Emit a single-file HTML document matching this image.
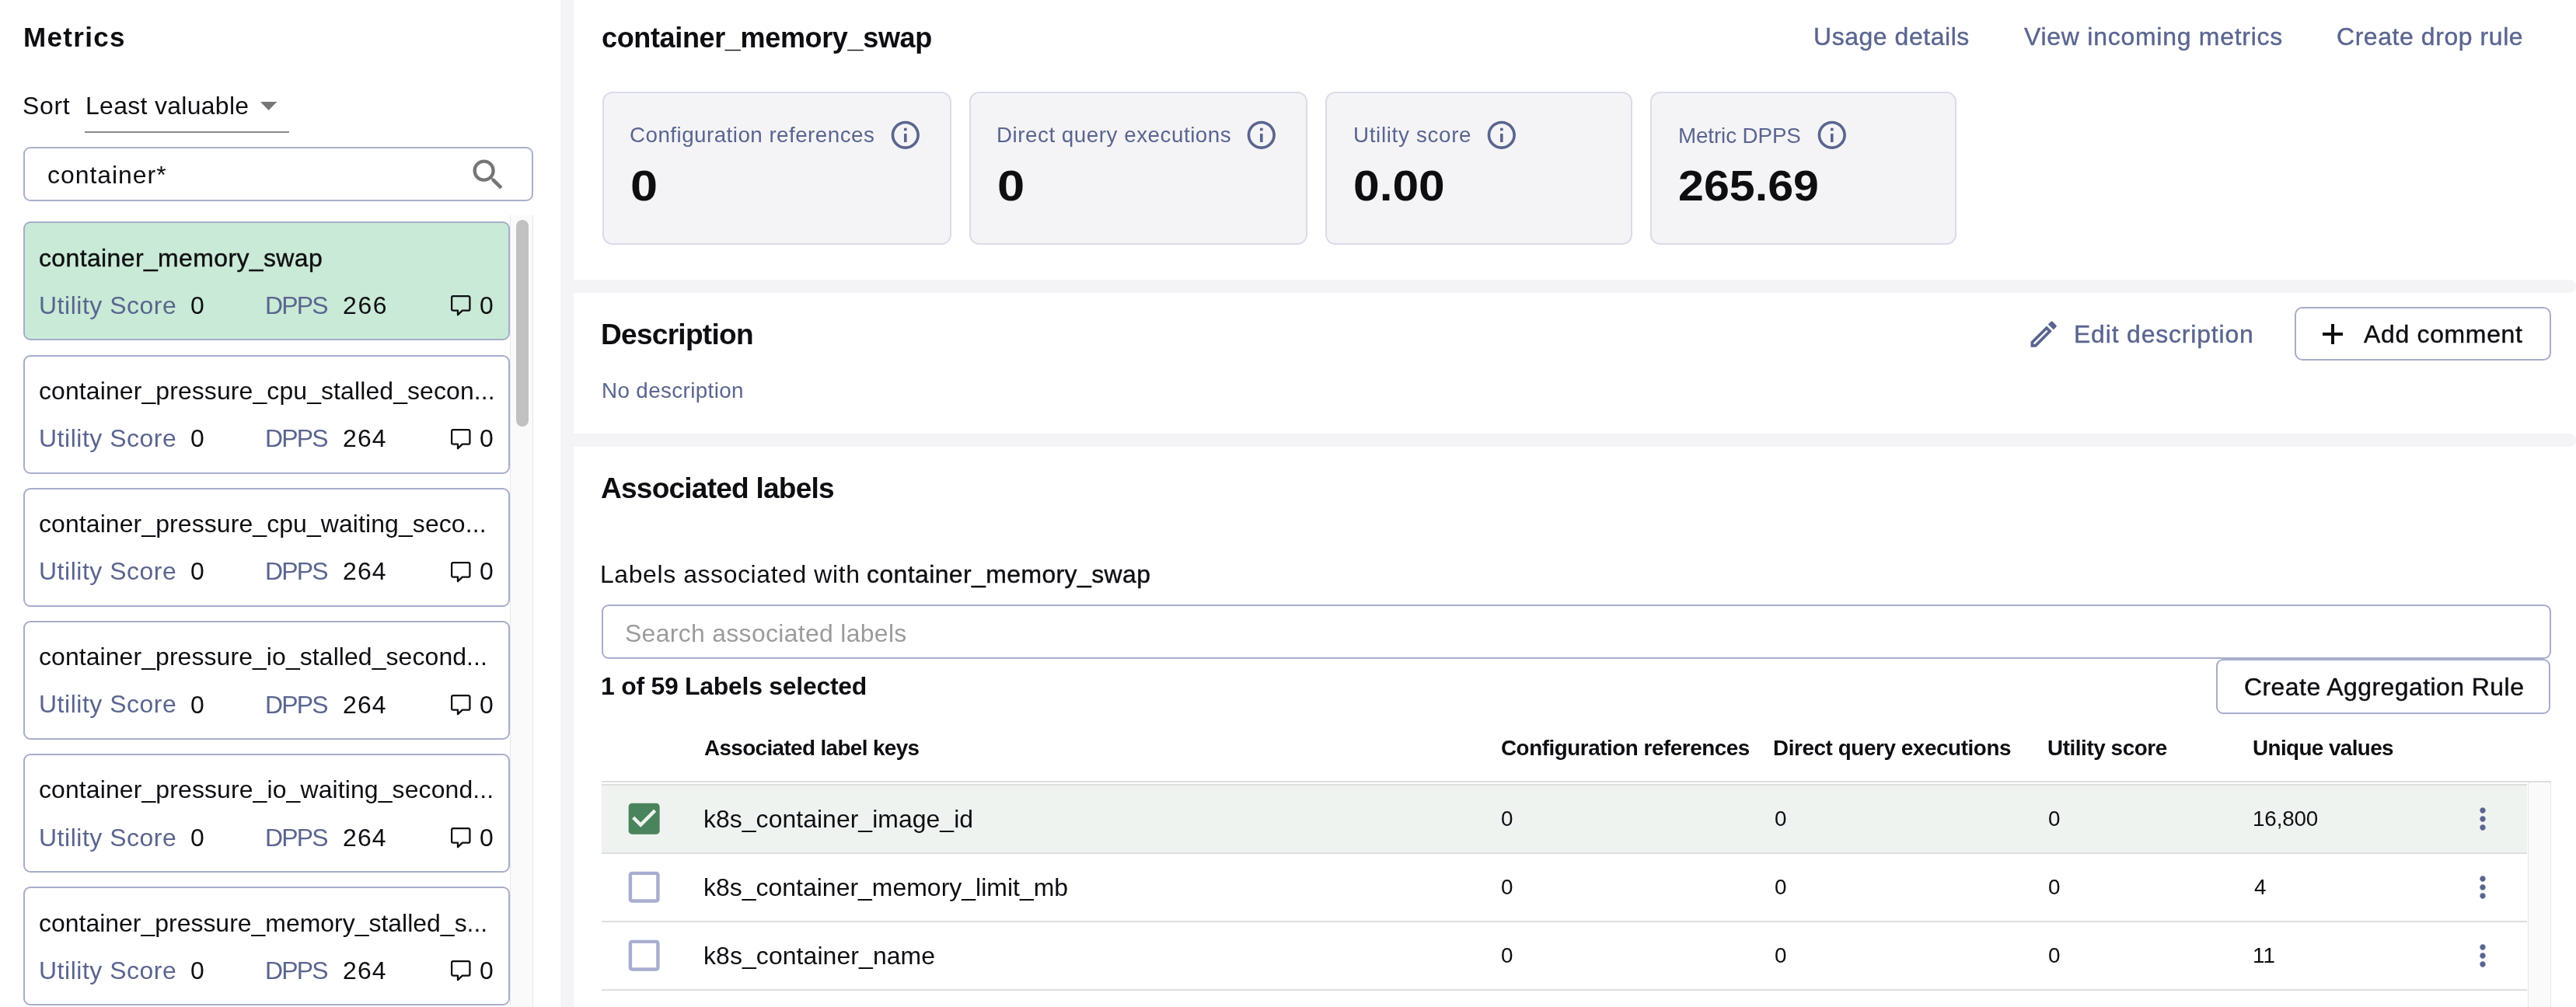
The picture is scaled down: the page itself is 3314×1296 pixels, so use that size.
<!DOCTYPE html>
<html><head><meta charset="utf-8"><title>Metrics</title>
<style>
html,body{margin:0;padding:0;background:#fff;width:3314px;height:1296px;overflow:hidden;position:relative}
body{font-family:"Liberation Sans",sans-serif}
.tx{position:absolute;white-space:nowrap;will-change:transform}
.bx{position:absolute;display:block}
</style></head><body>
<div class="bx" style="left:721.00px;top:-10.00px;width:17.00px;height:1316.00px;background:#f4f4f7"></div>
<div class="bx" style="left:730.00px;top:359.50px;width:2584.00px;height:17.50px;background:#f4f4f7;border-radius:0 9px 9px 0"></div>
<div class="bx" style="left:730.00px;top:557.50px;width:2584.00px;height:17.50px;background:#f4f4f7;border-radius:0 9px 9px 0"></div>
<div class="bx" style="left:738.00px;top:-20.00px;width:2576.00px;height:379.50px;background:#fff;border-radius:8px 0 0 8px"></div>
<div class="bx" style="left:738.00px;top:377.00px;width:2576.00px;height:180.50px;background:#fff;border-radius:8px 0 0 8px"></div>
<div class="bx" style="left:738.00px;top:575.00px;width:2576.00px;height:745.00px;background:#fff;border-radius:8px 0 0 8px"></div>
<div class="bx" style="left:109.00px;top:169.00px;width:263.00px;height:2.00px;background:#8a8a8a"></div>
<svg class="bx" style="left:334.7px;top:131px" width="21.2" height="11" viewBox="0 0 21.2 11"><path d="M0 0H21.2L10.6 11Z" fill="#757575"/></svg>
<div class="bx" style="left:30.00px;top:188.90px;width:655.60px;height:69.80px;border:2px solid #a9b0cc;border-radius:9px;box-sizing:border-box"></div>
<svg class="bx" style="left:602.1px;top:198.5px" width="52.15" height="52.15" viewBox="0 0 24 24"><path fill="#757575" d="M15.5 14h-.79l-.28-.27C15.41 12.59 16 11.11 16 9.5 16 5.91 13.09 3 9.5 3S3 5.91 3 9.5 5.91 16 9.5 16c1.61 0 3.09-.59 4.23-1.57l.27.28v.79l5 4.99L20.49 19l-4.99-5zm-6 0C7.01 14 5 11.99 5 9.5S7.01 5 9.5 5 14 7.01 14 9.5 11.99 14 9.5 14z"/></svg>
<div class="bx" style="left:655.50px;top:277.00px;width:30.50px;height:1019.00px;background:#fafafa;border-left:1.5px solid #e6e6e6;border-right:1.5px solid #e6e6e6;box-sizing:border-box"></div>
<div class="bx" style="left:664.00px;top:283.00px;width:16.00px;height:266.00px;background:#c1c1c1;border-radius:8px"></div>
<div class="bx" style="left:30.20px;top:285.30px;width:625.40px;height:153.20px;background:#c9ead6;border:2px solid #a6adcb;border-radius:9px;box-sizing:border-box"></div>
<svg class="bx" style="left:579.5px;top:380.30px" width="26" height="27" viewBox="0 0 26 27"><path d="M3.1 1.1H22.4Q24.4 1.1 24.4 3.1V17.7Q24.4 19.7 22.4 19.7H14.8L9 25.2V19.7H3.1Q1.1 19.7 1.1 17.7V3.1Q1.1 1.1 3.1 1.1Z" fill="none" stroke="#0d0e12" stroke-width="2.3" stroke-linejoin="round"/></svg>
<div class="bx" style="left:30.20px;top:456.50px;width:625.40px;height:153.20px;background:#fff;border:2px solid #a6adcb;border-radius:9px;box-sizing:border-box"></div>
<svg class="bx" style="left:579.5px;top:551.50px" width="26" height="27" viewBox="0 0 26 27"><path d="M3.1 1.1H22.4Q24.4 1.1 24.4 3.1V17.7Q24.4 19.7 22.4 19.7H14.8L9 25.2V19.7H3.1Q1.1 19.7 1.1 17.7V3.1Q1.1 1.1 3.1 1.1Z" fill="none" stroke="#0d0e12" stroke-width="2.3" stroke-linejoin="round"/></svg>
<div class="bx" style="left:30.20px;top:627.70px;width:625.40px;height:153.20px;background:#fff;border:2px solid #a6adcb;border-radius:9px;box-sizing:border-box"></div>
<svg class="bx" style="left:579.5px;top:722.70px" width="26" height="27" viewBox="0 0 26 27"><path d="M3.1 1.1H22.4Q24.4 1.1 24.4 3.1V17.7Q24.4 19.7 22.4 19.7H14.8L9 25.2V19.7H3.1Q1.1 19.7 1.1 17.7V3.1Q1.1 1.1 3.1 1.1Z" fill="none" stroke="#0d0e12" stroke-width="2.3" stroke-linejoin="round"/></svg>
<div class="bx" style="left:30.20px;top:798.90px;width:625.40px;height:153.20px;background:#fff;border:2px solid #a6adcb;border-radius:9px;box-sizing:border-box"></div>
<svg class="bx" style="left:579.5px;top:893.90px" width="26" height="27" viewBox="0 0 26 27"><path d="M3.1 1.1H22.4Q24.4 1.1 24.4 3.1V17.7Q24.4 19.7 22.4 19.7H14.8L9 25.2V19.7H3.1Q1.1 19.7 1.1 17.7V3.1Q1.1 1.1 3.1 1.1Z" fill="none" stroke="#0d0e12" stroke-width="2.3" stroke-linejoin="round"/></svg>
<div class="bx" style="left:30.20px;top:970.10px;width:625.40px;height:153.20px;background:#fff;border:2px solid #a6adcb;border-radius:9px;box-sizing:border-box"></div>
<svg class="bx" style="left:579.5px;top:1065.10px" width="26" height="27" viewBox="0 0 26 27"><path d="M3.1 1.1H22.4Q24.4 1.1 24.4 3.1V17.7Q24.4 19.7 22.4 19.7H14.8L9 25.2V19.7H3.1Q1.1 19.7 1.1 17.7V3.1Q1.1 1.1 3.1 1.1Z" fill="none" stroke="#0d0e12" stroke-width="2.3" stroke-linejoin="round"/></svg>
<div class="bx" style="left:30.20px;top:1141.30px;width:625.40px;height:153.20px;background:#fff;border:2px solid #a6adcb;border-radius:9px;box-sizing:border-box"></div>
<svg class="bx" style="left:579.5px;top:1236.30px" width="26" height="27" viewBox="0 0 26 27"><path d="M3.1 1.1H22.4Q24.4 1.1 24.4 3.1V17.7Q24.4 19.7 22.4 19.7H14.8L9 25.2V19.7H3.1Q1.1 19.7 1.1 17.7V3.1Q1.1 1.1 3.1 1.1Z" fill="none" stroke="#0d0e12" stroke-width="2.3" stroke-linejoin="round"/></svg>
<div class="bx" style="left:774.50px;top:118.20px;width:449.00px;height:197.30px;background:#f4f4f7;border:2px solid #d9dce8;border-radius:13px;box-sizing:border-box"></div>
<div class="bx" style="left:1246.50px;top:118.20px;width:435.00px;height:197.30px;background:#f4f4f7;border:2px solid #d9dce8;border-radius:13px;box-sizing:border-box"></div>
<div class="bx" style="left:1704.50px;top:118.20px;width:395.00px;height:197.30px;background:#f4f4f7;border:2px solid #d9dce8;border-radius:13px;box-sizing:border-box"></div>
<div class="bx" style="left:2123.00px;top:118.20px;width:394.00px;height:197.30px;background:#f4f4f7;border:2px solid #d9dce8;border-radius:13px;box-sizing:border-box"></div>
<svg class="bx" style="left:1143.20px;top:151.90px" width="43.6" height="43.6" viewBox="0 0 24 24"><path fill="#5a658f" d="M11 7h2v2h-2zm0 4h2v6h-2zm1-9C6.48 2 2 6.48 2 12s4.48 10 10 10 10-4.48 10-10S17.52 2 12 2zm0 18c-4.41 0-8-3.59-8-8s3.59-8 8-8 8 3.59 8 8-3.59 8-8 8z"/></svg>
<svg class="bx" style="left:1601.20px;top:151.90px" width="43.6" height="43.6" viewBox="0 0 24 24"><path fill="#5a658f" d="M11 7h2v2h-2zm0 4h2v6h-2zm1-9C6.48 2 2 6.48 2 12s4.48 10 10 10 10-4.48 10-10S17.52 2 12 2zm0 18c-4.41 0-8-3.59-8-8s3.59-8 8-8 8 3.59 8 8-3.59 8-8 8z"/></svg>
<svg class="bx" style="left:1910.00px;top:151.90px" width="43.6" height="43.6" viewBox="0 0 24 24"><path fill="#5a658f" d="M11 7h2v2h-2zm0 4h2v6h-2zm1-9C6.48 2 2 6.48 2 12s4.48 10 10 10 10-4.48 10-10S17.52 2 12 2zm0 18c-4.41 0-8-3.59-8-8s3.59-8 8-8 8 3.59 8 8-3.59 8-8 8z"/></svg>
<svg class="bx" style="left:2335.00px;top:151.90px" width="43.6" height="43.6" viewBox="0 0 24 24"><path fill="#5a658f" d="M11 7h2v2h-2zm0 4h2v6h-2zm1-9C6.48 2 2 6.48 2 12s4.48 10 10 10 10-4.48 10-10S17.52 2 12 2zm0 18c-4.41 0-8-3.59-8-8s3.59-8 8-8 8 3.59 8 8-3.59 8-8 8z"/></svg>
<svg class="bx" style="left:2606.5px;top:407.9px" width="44.26" height="44.26" viewBox="0 0 24 24"><path fill="#5a658f" d="M3 17.25V21h3.75L17.81 9.94l-3.75-3.75L3 17.25zM5.92 19H5v-.92l9.06-9.06.92.92L5.92 19zM20.71 5.63l-2.34-2.34c-.2-.2-.45-.29-.71-.29s-.51.1-.7.29l-1.83 1.83 3.75 3.75 1.83-1.83c.39-.39.39-1.02 0-1.41z"/></svg>
<div class="bx" style="left:2952.40px;top:395.10px;width:329.20px;height:69.40px;border:2px solid #a6adcb;border-radius:10px;box-sizing:border-box"></div>
<div class="bx" style="left:2988.00px;top:428.20px;width:26.00px;height:3.60px;background:#0d0e12"></div>
<div class="bx" style="left:2999.20px;top:417.00px;width:3.60px;height:26.00px;background:#0d0e12"></div>
<div class="bx" style="left:774.20px;top:778.00px;width:2507.50px;height:69.80px;border:2px solid #a6adcb;border-radius:9px;box-sizing:border-box"></div>
<div class="bx" style="left:2851.40px;top:848.30px;width:429.80px;height:70.30px;border:2px solid #a6adcb;border-radius:9px;box-sizing:border-box"></div>
<div class="bx" style="left:774.00px;top:1005.00px;width:2508.00px;height:2.00px;background:#dedede"></div>
<div class="bx" style="left:3252.00px;top:1007.00px;width:30.00px;height:289.00px;background:#fafafa;border-left:1.5px solid #e6e6e6;border-right:1.5px solid #e6e6e6;box-sizing:border-box"></div>
<div class="bx" style="left:774.00px;top:1009.00px;width:2477.00px;height:2.00px;background:#dedede"></div>
<div class="bx" style="left:774.00px;top:1011.00px;width:2477.00px;height:86.00px;background:#eff3f0"></div>
<div class="bx" style="left:774.00px;top:1097.00px;width:2477.00px;height:2.00px;background:#dedede"></div>
<div class="bx" style="left:774.00px;top:1185.00px;width:2477.00px;height:2.00px;background:#dedede"></div>
<div class="bx" style="left:774.00px;top:1273.00px;width:2477.00px;height:2.00px;background:#dedede"></div>
<svg class="bx" style="left:801.70px;top:1027.35px" width="53.3" height="53.3" viewBox="0 0 24 24"><path fill="#4a845c" d="M19 3H5c-1.11 0-2 .9-2 2v14c0 1.1.89 2 2 2h14c1.11 0 2-.9 2-2V5c0-1.1-.89-2-2-2z"/><path fill="#eef2ef" d="M10 17l-5-5 1.41-1.41L10 14.17l7.59-7.59L19 8l-9 9z"/></svg>
<svg class="bx" style="left:3172.00px;top:1032.00px" width="44" height="44" viewBox="0 0 24 24"><path fill="#5a658f" d="M12 8c1.1 0 2-.9 2-2s-.9-2-2-2-2 .9-2 2 .9 2 2 2zm0 2c-1.1 0-2 .9-2 2s.9 2 2 2 2-.9 2-2-.9-2-2-2zm0 6c-1.1 0-2 .9-2 2s.9 2 2 2 2-.9 2-2-.9-2-2-2z"/></svg>
<svg class="bx" style="left:801.70px;top:1115.35px" width="53.3" height="53.3" viewBox="0 0 24 24"><path fill="#a9aed0" d="M19 5v14H5V5h14m0-2H5c-1.1 0-2 .9-2 2v14c0 1.1.9 2 2 2h14c1.1 0 2-.9 2-2V5c0-1.1-.9-2-2-2z"/></svg>
<svg class="bx" style="left:3172.00px;top:1120.00px" width="44" height="44" viewBox="0 0 24 24"><path fill="#5a658f" d="M12 8c1.1 0 2-.9 2-2s-.9-2-2-2-2 .9-2 2 .9 2 2 2zm0 2c-1.1 0-2 .9-2 2s.9 2 2 2 2-.9 2-2-.9-2-2-2zm0 6c-1.1 0-2 .9-2 2s.9 2 2 2 2-.9 2-2-.9-2-2-2z"/></svg>
<svg class="bx" style="left:801.70px;top:1203.35px" width="53.3" height="53.3" viewBox="0 0 24 24"><path fill="#a9aed0" d="M19 5v14H5V5h14m0-2H5c-1.1 0-2 .9-2 2v14c0 1.1.9 2 2 2h14c1.1 0 2-.9 2-2V5c0-1.1-.9-2-2-2z"/></svg>
<svg class="bx" style="left:3172.00px;top:1208.00px" width="44" height="44" viewBox="0 0 24 24"><path fill="#5a658f" d="M12 8c1.1 0 2-.9 2-2s-.9-2-2-2-2 .9-2 2 .9 2 2 2zm0 2c-1.1 0-2 .9-2 2s.9 2 2 2 2-.9 2-2-.9-2-2-2zm0 6c-1.1 0-2 .9-2 2s.9 2 2 2 2-.9 2-2-.9-2-2-2z"/></svg>
<div id="t_metrics" class="tx" style="left:29.60px;top:29.65px;font-size:35.02px;line-height:35.02px;font-weight:bold;color:#0d0e12;letter-spacing:1.317px;">Metrics</div>
<div id="t_sort" class="tx" style="left:29.40px;top:120.96px;font-size:31.93px;line-height:31.93px;font-weight:normal;color:#0d0e12;letter-spacing:0.733px;">Sort</div>
<div id="t_least" class="tx" style="left:109.60px;top:120.96px;font-size:31.93px;line-height:31.93px;font-weight:normal;color:#0d0e12;letter-spacing:0.323px;">Least valuable</div>
<div id="t_search" class="tx" style="left:60.60px;top:209.71px;font-size:31.93px;line-height:31.93px;font-weight:normal;color:#0d0e12;letter-spacing:0.989px;">container*</div>
<div id="t_li0_title" class="tx" style="left:49.60px;top:316.51px;font-size:31.93px;line-height:31.93px;font-weight:normal;color:#0d0e12;letter-spacing:0.405px;-webkit-text-stroke:0.4px currentColor;">container_memory_swap</div>
<div id="t_li0_us" class="tx" style="left:50.00px;top:377.71px;font-size:31.93px;line-height:31.93px;font-weight:normal;color:#5a658f;letter-spacing:0.542px;">Utility Score</div>
<div id="t_li0_usv" class="tx" style="left:244.60px;top:377.71px;font-size:31.93px;line-height:31.93px;font-weight:normal;color:#0d0e12;letter-spacing:0.000px;">0</div>
<div id="t_li0_dp" class="tx" style="left:341.40px;top:377.71px;font-size:31.93px;line-height:31.93px;font-weight:normal;color:#5a658f;letter-spacing:-1.833px;">DPPS</div>
<div id="t_li0_dpv" class="tx" style="left:441.20px;top:377.71px;font-size:31.93px;line-height:31.93px;font-weight:normal;color:#0d0e12;letter-spacing:1.650px;">266</div>
<div id="t_li0_cv" class="tx" style="left:617.00px;top:377.71px;font-size:31.93px;line-height:31.93px;font-weight:normal;color:#0d0e12;letter-spacing:0.000px;">0</div>
<div id="t_li1_title" class="tx" style="left:49.60px;top:487.71px;font-size:31.93px;line-height:31.93px;font-weight:normal;color:#0d0e12;letter-spacing:0.121px;">container_pressure_cpu_stalled_secon...</div>
<div id="t_li1_us" class="tx" style="left:50.00px;top:548.91px;font-size:31.93px;line-height:31.93px;font-weight:normal;color:#5a658f;letter-spacing:0.542px;">Utility Score</div>
<div id="t_li1_usv" class="tx" style="left:244.60px;top:548.81px;font-size:31.93px;line-height:31.93px;font-weight:normal;color:#0d0e12;letter-spacing:0.000px;">0</div>
<div id="t_li1_dp" class="tx" style="left:341.40px;top:548.81px;font-size:31.93px;line-height:31.93px;font-weight:normal;color:#5a658f;letter-spacing:-1.833px;">DPPS</div>
<div id="t_li1_dpv" class="tx" style="left:441.20px;top:548.81px;font-size:31.93px;line-height:31.93px;font-weight:normal;color:#0d0e12;letter-spacing:1.150px;">264</div>
<div id="t_li1_cv" class="tx" style="left:617.00px;top:548.81px;font-size:31.93px;line-height:31.93px;font-weight:normal;color:#0d0e12;letter-spacing:0.000px;">0</div>
<div id="t_li2_title" class="tx" style="left:49.60px;top:658.91px;font-size:31.93px;line-height:31.93px;font-weight:normal;color:#0d0e12;letter-spacing:0.111px;">container_pressure_cpu_waiting_seco...</div>
<div id="t_li2_us" class="tx" style="left:50.00px;top:720.11px;font-size:31.93px;line-height:31.93px;font-weight:normal;color:#5a658f;letter-spacing:0.542px;">Utility Score</div>
<div id="t_li2_usv" class="tx" style="left:244.60px;top:719.91px;font-size:31.93px;line-height:31.93px;font-weight:normal;color:#0d0e12;letter-spacing:0.000px;">0</div>
<div id="t_li2_dp" class="tx" style="left:341.40px;top:719.91px;font-size:31.93px;line-height:31.93px;font-weight:normal;color:#5a658f;letter-spacing:-1.833px;">DPPS</div>
<div id="t_li2_dpv" class="tx" style="left:441.20px;top:719.91px;font-size:31.93px;line-height:31.93px;font-weight:normal;color:#0d0e12;letter-spacing:1.150px;">264</div>
<div id="t_li2_cv" class="tx" style="left:617.00px;top:719.91px;font-size:31.93px;line-height:31.93px;font-weight:normal;color:#0d0e12;letter-spacing:0.000px;">0</div>
<div id="t_li3_title" class="tx" style="left:49.60px;top:830.11px;font-size:31.93px;line-height:31.93px;font-weight:normal;color:#0d0e12;letter-spacing:0.097px;">container_pressure_io_stalled_second...</div>
<div id="t_li3_us" class="tx" style="left:50.00px;top:891.31px;font-size:31.93px;line-height:31.93px;font-weight:normal;color:#5a658f;letter-spacing:0.542px;">Utility Score</div>
<div id="t_li3_usv" class="tx" style="left:244.60px;top:891.51px;font-size:31.93px;line-height:31.93px;font-weight:normal;color:#0d0e12;letter-spacing:0.000px;">0</div>
<div id="t_li3_dp" class="tx" style="left:341.40px;top:891.51px;font-size:31.93px;line-height:31.93px;font-weight:normal;color:#5a658f;letter-spacing:-1.833px;">DPPS</div>
<div id="t_li3_dpv" class="tx" style="left:441.20px;top:891.51px;font-size:31.93px;line-height:31.93px;font-weight:normal;color:#0d0e12;letter-spacing:1.150px;">264</div>
<div id="t_li3_cv" class="tx" style="left:617.00px;top:891.51px;font-size:31.93px;line-height:31.93px;font-weight:normal;color:#0d0e12;letter-spacing:0.000px;">0</div>
<div id="t_li4_title" class="tx" style="left:49.60px;top:1001.31px;font-size:31.93px;line-height:31.93px;font-weight:normal;color:#0d0e12;letter-spacing:0.129px;">container_pressure_io_waiting_second...</div>
<div id="t_li4_us" class="tx" style="left:50.00px;top:1062.51px;font-size:31.93px;line-height:31.93px;font-weight:normal;color:#5a658f;letter-spacing:0.542px;">Utility Score</div>
<div id="t_li4_usv" class="tx" style="left:244.60px;top:1062.61px;font-size:31.93px;line-height:31.93px;font-weight:normal;color:#0d0e12;letter-spacing:0.000px;">0</div>
<div id="t_li4_dp" class="tx" style="left:341.40px;top:1062.61px;font-size:31.93px;line-height:31.93px;font-weight:normal;color:#5a658f;letter-spacing:-1.833px;">DPPS</div>
<div id="t_li4_dpv" class="tx" style="left:441.20px;top:1062.61px;font-size:31.93px;line-height:31.93px;font-weight:normal;color:#0d0e12;letter-spacing:1.150px;">264</div>
<div id="t_li4_cv" class="tx" style="left:617.00px;top:1062.61px;font-size:31.93px;line-height:31.93px;font-weight:normal;color:#0d0e12;letter-spacing:0.000px;">0</div>
<div id="t_li5_title" class="tx" style="left:49.60px;top:1172.51px;font-size:31.93px;line-height:31.93px;font-weight:normal;color:#0d0e12;letter-spacing:0.016px;">container_pressure_memory_stalled_s...</div>
<div id="t_li5_us" class="tx" style="left:50.00px;top:1233.71px;font-size:31.93px;line-height:31.93px;font-weight:normal;color:#5a658f;letter-spacing:0.542px;">Utility Score</div>
<div id="t_li5_usv" class="tx" style="left:244.60px;top:1233.71px;font-size:31.93px;line-height:31.93px;font-weight:normal;color:#0d0e12;letter-spacing:0.000px;">0</div>
<div id="t_li5_dp" class="tx" style="left:341.40px;top:1233.71px;font-size:31.93px;line-height:31.93px;font-weight:normal;color:#5a658f;letter-spacing:-1.833px;">DPPS</div>
<div id="t_li5_dpv" class="tx" style="left:441.20px;top:1233.71px;font-size:31.93px;line-height:31.93px;font-weight:normal;color:#0d0e12;letter-spacing:1.150px;">264</div>
<div id="t_li5_cv" class="tx" style="left:617.00px;top:1233.71px;font-size:31.93px;line-height:31.93px;font-weight:normal;color:#0d0e12;letter-spacing:0.000px;">0</div>
<div id="t_title" class="tx" style="left:774.00px;top:30.53px;font-size:36.05px;line-height:36.05px;font-weight:bold;color:#0d0e12;letter-spacing:-0.375px;">container_memory_swap</div>
<div id="t_usage" class="tx" style="left:2332.80px;top:32.41px;font-size:31.93px;line-height:31.93px;font-weight:normal;color:#5a658f;letter-spacing:0.575px;-webkit-text-stroke:0.4px currentColor;">Usage details</div>
<div id="t_view" class="tx" style="left:2604.40px;top:32.41px;font-size:31.93px;line-height:31.93px;font-weight:normal;color:#5a658f;letter-spacing:0.765px;-webkit-text-stroke:0.4px currentColor;">View incoming metrics</div>
<div id="t_drop" class="tx" style="left:3006.40px;top:32.41px;font-size:31.93px;line-height:31.93px;font-weight:normal;color:#5a658f;letter-spacing:0.593px;-webkit-text-stroke:0.4px currentColor;">Create drop rule</div>
<div id="t_s1l" class="tx" style="left:810.40px;top:160.40px;font-size:27.81px;line-height:27.81px;font-weight:normal;color:#5a658f;letter-spacing:0.452px;">Configuration references</div>
<div id="t_s2l" class="tx" style="left:1282.20px;top:160.40px;font-size:27.81px;line-height:27.81px;font-weight:normal;color:#5a658f;letter-spacing:0.509px;">Direct query executions</div>
<div id="t_s3l" class="tx" style="left:1741.20px;top:160.40px;font-size:27.81px;line-height:27.81px;font-weight:normal;color:#5a658f;letter-spacing:0.658px;">Utility score</div>
<div id="t_s4l" class="tx" style="left:2158.80px;top:160.60px;font-size:27.81px;line-height:27.81px;font-weight:normal;color:#5a658f;letter-spacing:-0.120px;">Metric DPPS</div>
<div id="t_s1v" class="tx" style="left:811.00px;top:213.38px;font-size:54.59px;line-height:54.59px;font-weight:bold;color:#0d0e12;letter-spacing:0.000px;transform:scaleX(1.1550);transform-origin:0 0;">0</div>
<div id="t_s2v" class="tx" style="left:1283.00px;top:213.38px;font-size:54.59px;line-height:54.59px;font-weight:bold;color:#0d0e12;letter-spacing:0.000px;transform:scaleX(1.1604);transform-origin:0 0;">0</div>
<div id="t_s3v" class="tx" style="left:1741.00px;top:213.38px;font-size:54.59px;line-height:54.59px;font-weight:bold;color:#0d0e12;letter-spacing:0.000px;transform:scaleX(1.1080);transform-origin:0 0;">0.00</div>
<div id="t_s4v" class="tx" style="left:2159.20px;top:213.38px;font-size:54.59px;line-height:54.59px;font-weight:bold;color:#0d0e12;letter-spacing:0.000px;transform:scaleX(1.0842);transform-origin:0 0;">265.69</div>
<div id="t_desc" class="tx" style="left:773.40px;top:412.25px;font-size:37.08px;line-height:37.08px;font-weight:bold;color:#0d0e12;letter-spacing:-0.740px;">Description</div>
<div id="t_nodesc" class="tx" style="left:773.60px;top:488.80px;font-size:27.81px;line-height:27.81px;font-weight:normal;color:#5a658f;letter-spacing:0.369px;">No description</div>
<div id="t_edit" class="tx" style="left:2668.00px;top:415.31px;font-size:31.93px;line-height:31.93px;font-weight:normal;color:#5a658f;letter-spacing:0.833px;-webkit-text-stroke:0.4px currentColor;">Edit description</div>
<div id="t_addc" class="tx" style="left:3041.00px;top:415.21px;font-size:31.93px;line-height:31.93px;font-weight:normal;color:#0d0e12;letter-spacing:0.700px;-webkit-text-stroke:0.4px currentColor;">Add comment</div>
<div id="t_assoc" class="tx" style="left:773.20px;top:610.15px;font-size:37.08px;line-height:37.08px;font-weight:bold;color:#0d0e12;letter-spacing:-0.788px;">Associated labels</div>
<div id="t_lw" class="tx" style="left:772.20px;top:723.66px;font-size:31.93px;line-height:31.93px;font-weight:normal;color:#0d0e12;letter-spacing:0.605px;">Labels associated with</div>
<div id="t_lw2" class="tx" style="left:1114.80px;top:723.61px;font-size:31.93px;line-height:31.93px;font-weight:normal;color:#0d0e12;letter-spacing:0.415px;-webkit-text-stroke:0.4px currentColor;">container_memory_swap</div>
<div id="t_ph" class="tx" style="left:803.60px;top:799.51px;font-size:31.93px;line-height:31.93px;font-weight:normal;color:#9b9b9b;letter-spacing:0.322px;">Search associated labels</div>
<div id="t_sel" class="tx" style="left:772.60px;top:867.96px;font-size:31.93px;line-height:31.93px;font-weight:bold;color:#0d0e12;letter-spacing:-0.245px;">1 of 59 Labels selected</div>
<div id="t_car" class="tx" style="left:2886.80px;top:868.81px;font-size:31.93px;line-height:31.93px;font-weight:normal;color:#0d0e12;letter-spacing:0.468px;-webkit-text-stroke:0.4px currentColor;">Create Aggregation Rule</div>
<div id="t_h1" class="tx" style="left:905.60px;top:949.10px;font-size:27.81px;line-height:27.81px;font-weight:bold;color:#0d0e12;letter-spacing:-0.595px;">Associated label keys</div>
<div id="t_h2" class="tx" style="left:1930.60px;top:949.10px;font-size:27.81px;line-height:27.81px;font-weight:bold;color:#0d0e12;letter-spacing:-0.452px;">Configuration references</div>
<div id="t_h3" class="tx" style="left:2281.00px;top:949.10px;font-size:27.81px;line-height:27.81px;font-weight:bold;color:#0d0e12;letter-spacing:-0.395px;">Direct query executions</div>
<div id="t_h4" class="tx" style="left:2634.20px;top:949.10px;font-size:27.81px;line-height:27.81px;font-weight:bold;color:#0d0e12;letter-spacing:-0.417px;">Utility score</div>
<div id="t_h5" class="tx" style="left:2897.60px;top:949.10px;font-size:27.81px;line-height:27.81px;font-weight:bold;color:#0d0e12;letter-spacing:-0.575px;">Unique values</div>
<div id="t_r0_k" class="tx" style="left:905.30px;top:1039.21px;font-size:31.93px;line-height:31.93px;font-weight:normal;color:#0d0e12;letter-spacing:0.048px;">k8s_container_image_id</div>
<div id="t_r0_c1" class="tx" style="left:1930.80px;top:1039.80px;font-size:27.81px;line-height:27.81px;font-weight:normal;color:#0d0e12;letter-spacing:0.000px;">0</div>
<div id="t_r0_c2" class="tx" style="left:2282.80px;top:1039.80px;font-size:27.81px;line-height:27.81px;font-weight:normal;color:#0d0e12;letter-spacing:0.000px;">0</div>
<div id="t_r0_c3" class="tx" style="left:2635.10px;top:1039.80px;font-size:27.81px;line-height:27.81px;font-weight:normal;color:#0d0e12;letter-spacing:0.000px;">0</div>
<div id="t_r0_c4" class="tx" style="left:2897.50px;top:1039.80px;font-size:27.81px;line-height:27.81px;font-weight:normal;color:#0d0e12;letter-spacing:-0.140px;">16,800</div>
<div id="t_r1_k" class="tx" style="left:905.30px;top:1127.21px;font-size:31.93px;line-height:31.93px;font-weight:normal;color:#0d0e12;letter-spacing:0.025px;">k8s_container_memory_limit_mb</div>
<div id="t_r1_c1" class="tx" style="left:1930.80px;top:1127.80px;font-size:27.81px;line-height:27.81px;font-weight:normal;color:#0d0e12;letter-spacing:0.000px;">0</div>
<div id="t_r1_c2" class="tx" style="left:2282.80px;top:1127.80px;font-size:27.81px;line-height:27.81px;font-weight:normal;color:#0d0e12;letter-spacing:0.000px;">0</div>
<div id="t_r1_c3" class="tx" style="left:2635.10px;top:1127.80px;font-size:27.81px;line-height:27.81px;font-weight:normal;color:#0d0e12;letter-spacing:0.000px;">0</div>
<div id="t_r1_c4" class="tx" style="left:2899.50px;top:1127.80px;font-size:27.81px;line-height:27.81px;font-weight:normal;color:#0d0e12;letter-spacing:0.000px;">4</div>
<div id="t_r2_k" class="tx" style="left:905.30px;top:1215.21px;font-size:31.93px;line-height:31.93px;font-weight:normal;color:#0d0e12;letter-spacing:0.100px;">k8s_container_name</div>
<div id="t_r2_c1" class="tx" style="left:1930.80px;top:1215.80px;font-size:27.81px;line-height:27.81px;font-weight:normal;color:#0d0e12;letter-spacing:0.000px;">0</div>
<div id="t_r2_c2" class="tx" style="left:2282.80px;top:1215.80px;font-size:27.81px;line-height:27.81px;font-weight:normal;color:#0d0e12;letter-spacing:0.000px;">0</div>
<div id="t_r2_c3" class="tx" style="left:2635.10px;top:1215.80px;font-size:27.81px;line-height:27.81px;font-weight:normal;color:#0d0e12;letter-spacing:0.000px;">0</div>
<div id="t_r2_c4" class="tx" style="left:2897.50px;top:1215.80px;font-size:27.81px;line-height:27.81px;font-weight:normal;color:#0d0e12;letter-spacing:0.000px;">11</div>
</body></html>
